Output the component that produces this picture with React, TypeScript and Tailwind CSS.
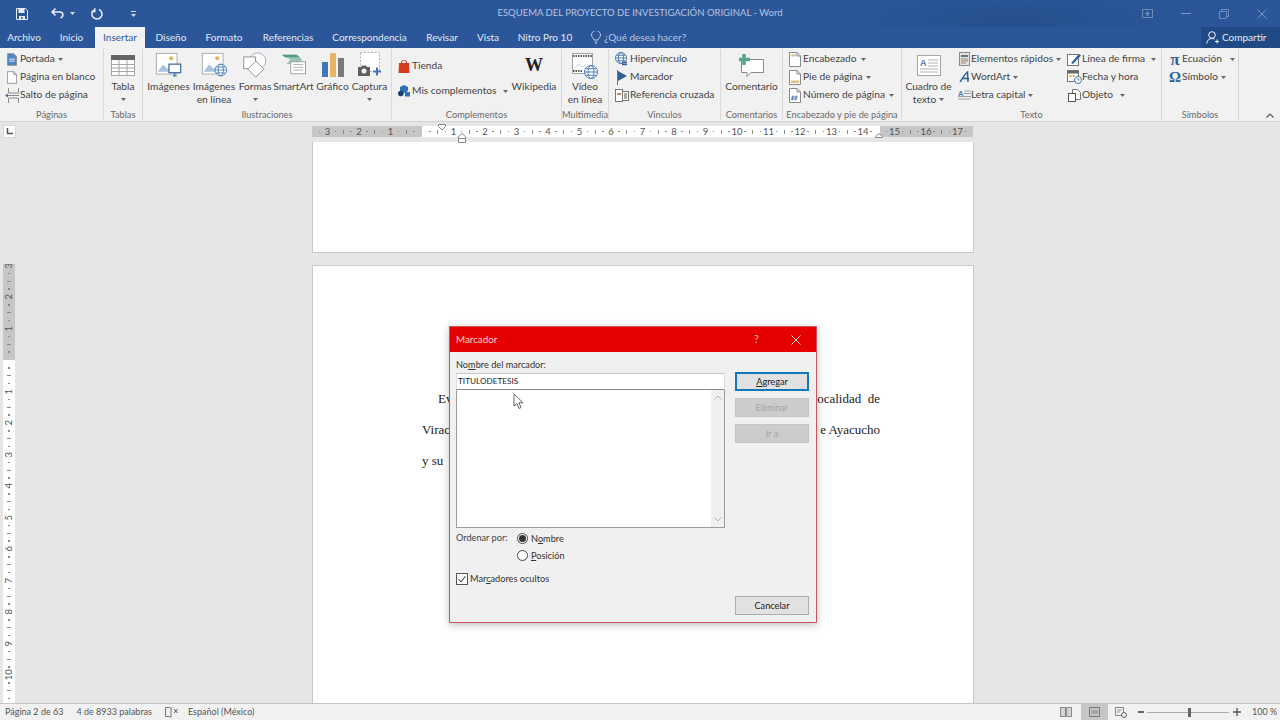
import type { ReactNode } from 'react';

const range = (from: number, to: number) => {
  const out: number[] = [];
  for (let i = from; i <= to; i++) out.push(i);
  return out;
};

function Caret({ className = '' }: { className?: string }) {
  return (
    <svg width="5" height="3" viewBox="0 0 5 3" className={`shrink-0 ${className}`}>
      <path d="M0 0h5L2.5 3z" fill="#666" />
    </svg>
  );
}

function RulerMark({ q, vertical }: { q: number; vertical?: boolean }) {
  const size = vertical ? 'h-[7.875px] w-full' : 'w-[7.875px] h-full';
  let mark: ReactNode = <span className="size-[1.5px] bg-[#8a8a8a]" />;
  if (q % 4 === 0) {
    mark = (
      <span className={`text-[9.5px] leading-none text-[#555] ${vertical ? '-rotate-90' : ''}`}>
        {Math.abs(q / 4)}
      </span>
    );
  } else if (Math.abs(q % 4) === 2) {
    mark = <span className={vertical ? 'h-[1px] w-[4px] bg-[#8a8a8a]' : 'h-[4px] w-[1px] bg-[#8a8a8a]'} />;
  }
  return <div className={`flex shrink-0 items-center justify-center ${size}`}>{mark}</div>;
}

function RibbonGroup({ className, label, children }: { className: string; label: string; children: ReactNode }) {
  return (
    <div className={`my-[1px] flex shrink-0 flex-col border-r border-[#d8d8d8] ${className}`}>
      <div className="flex h-[59px] min-h-0 pt-[1px]">{children}</div>
      <div className="flex h-[12px] items-center justify-center whitespace-nowrap pt-[2px] text-[9.25px] text-[#6a6a6a]">{label}</div>
    </div>
  );
}

function BigButton({ className, icon, lines, caret }: { className: string; icon: ReactNode; lines: string[]; caret?: 'inline' | 'below' }) {
  return (
    <div className={`flex shrink-0 flex-col items-center ${className}`}>
      <div className="flex h-[30px] items-center justify-center">{icon}</div>
      {lines.map((line, i) => (
        <div key={line} className="flex h-[13px] items-center gap-[3px] whitespace-nowrap leading-[13px]">
          {line}
          {caret === 'inline' && i === lines.length - 1 && <Caret />}
        </div>
      ))}
      {caret === 'below' && (
        <div className="flex h-[13px] items-center">
          <Caret />
        </div>
      )}
    </div>
  );
}

function SmallRow({ icon, label, caret, gap = 'gap-[2px]', iconBox = 'w-[14px]' }: { icon: ReactNode; label: string; caret?: ReactNode; gap?: string; iconBox?: string }) {
  return (
    <div className={`flex h-[18px] items-center whitespace-nowrap ${gap}`}>
      <span className={`flex shrink-0 justify-center ${iconBox}`}>{icon}</span>
      <span>{label}</span>
      {caret}
    </div>
  );
}

/* ---- ribbon drawings ---- */

const PageIcon = ({ fill = '#fff', children }: { fill?: string; children?: ReactNode }) => (
  <svg width="12" height="15" viewBox="0 0 12 15">
    <path d="M.5.5h7.5l3.5 3.500v10.500h-11z" fill={fill} stroke="#8a8a8a" />
    <path d="M8 .5v3.500h3.500" fill="none" stroke="#8a8a8a" />
    {children}
  </svg>
);

const PictureBase = ({ children }: { children?: ReactNode }) => (
  <svg width="27" height="27" viewBox="0 0 30 30">
    <rect x="1.500" y="1.500" width="23" height="23" fill="#fff" stroke="#a5a5a5" />
    <circle cx="18" cy="7" r="2.300" fill="#e9b25a" />
    <path d="M3 22l6-8 5 5 3-2 5 5z" fill="#a9c3dd" />
    {children}
  </svg>
);

const Globe = ({ x, y, r = 6 }: { x: number; y: number; r?: number }) => (
  <g fill="#fff" stroke="#3d73ad" strokeWidth="0.900">
    <circle cx={x} cy={y} r={r} />
    <ellipse cx={x} cy={y} rx={r / 2.200} ry={r} fill="none" />
    <path d={`M${x - r} ${y}h${r * 2}M${x - r + 1} ${y - r / 2}h${r * 2 - 2}M${x - r + 1} ${y + r / 2}h${r * 2 - 2}`} fill="none" />
  </g>
);

function Mnemonic({ before, letter, after }: { before?: string; letter: string; after?: string }) {
  return (
    <span>
      {before}
      <span className="underline">{letter}</span>
      {after}
    </span>
  );
}

function DialogButton({ children, tone = 'normal', className = '' }: { children: ReactNode; tone?: 'normal' | 'primary' | 'disabled'; className?: string }) {
  const tones = {
    normal: 'border-[#adadad] bg-[#e1e1e1] text-[#222]',
    primary: 'border-2 border-[#0f78b8] bg-[#e1e1e1] text-[#222]',
    disabled: 'border-[#c4c4c4] bg-[#cccccc] text-[#a2a2a2]',
  };
  return (
    <div className={`flex h-[19px] w-[74px] items-center justify-center border text-[9.2px] ${tones[tone]} ${className}`}>
      {children}
    </div>
  );
}

function BookmarkDialog() {
  return (
    <div className="absolute left-[449px] top-[326px] flex h-[297px] w-[368px] flex-col border border-[#c9545b] bg-[#f0f0f0] text-[9.2px] text-[#333] shadow-[0_2px_8px_rgba(0,0,0,0.25)]">
      <div className="flex h-[25px] shrink-0 items-center bg-[#e60000] pl-[6px] text-[9.8px] text-[#f6d7d7]">
        <span className="flex-1">Marcador</span>
        <span className="mr-[32px] text-[11px] text-[#f3bcbc]">?</span>
        <svg width="10" height="10" viewBox="0 0 10 10" className="mr-[15px]">
          <path d="M.5.5l9 9M9.500.5l-9 9" stroke="#fbe3e3" strokeWidth="1" />
        </svg>
      </div>
      <div className="flex flex-1 flex-col pl-[6px] pr-[7px]">
        <div className="flex h-[21px] shrink-0 items-end pb-[1px]">
          <Mnemonic before="No" letter="m" after="bre del marcador:" />
        </div>
        <div className="flex shrink-0 gap-[10px]">
          <div className="w-[269px] shrink-0">
            <div className="flex h-[17px] items-center border border-b-[#8a8a8a] border-l-[#dcdcdc] border-r-[#dcdcdc] border-t-[#c8c8c8] bg-white pb-[1px] pl-[1px] text-[8.2px] text-[#222]">
              TITULODETESIS
            </div>
            <div className="flex h-[138px] border border-t-0 border-[#9b9b9b] bg-white">
              <div className="flex-1" />
              <div className="flex w-[13px] flex-col items-center justify-between bg-[#f0f0f0] py-[5px]">
                <svg width="8" height="5" viewBox="0 0 8 5"><path d="M.5 4.500L4 1l3.500 3.500" fill="none" stroke="#b5b5b5" /></svg>
                <svg width="8" height="5" viewBox="0 0 8 5"><path d="M.5.5L4 4 7.500.5" fill="none" stroke="#b5b5b5" /></svg>
              </div>
            </div>
            <div className="mt-[2px] flex h-[17px] items-center">
              <span className="w-[61px] pb-[2px] text-[#444]">Ordenar por:</span>
              <span className="flex size-[11px] items-center justify-center rounded-full border border-[#444] bg-white">
                <span className="size-[7px] rounded-full bg-[#333]" />
              </span>
              <span className="ml-[3px]"><Mnemonic before="N" letter="o" after="mbre" /></span>
            </div>
            <div className="flex h-[17px] items-center pl-[61px]">
              <span className="size-[11px] rounded-full border border-[#444] bg-white" />
              <span className="ml-[3px]"><Mnemonic letter="P" after="osición" /></span>
            </div>
            <div className="mt-[8px] flex h-[14px] items-center">
              <svg width="12" height="12" viewBox="0 0 12 12" className="shrink-0">
                <rect x=".5" y=".5" width="11" height="11" fill="#fff" stroke="#555" />
                <path d="M2.500 6l2.500 3 4.500-6" fill="none" stroke="#333" />
              </svg>
              <span className="ml-[2px]"><Mnemonic before="Mar" letter="c" after="adores ocultos" /></span>
            </div>
          </div>
          <div className="-mt-[1px] flex flex-col gap-[7px]">
            <DialogButton tone="primary"><Mnemonic letter="A" after="gregar" /></DialogButton>
            <DialogButton tone="disabled">Eliminar</DialogButton>
            <DialogButton tone="disabled">Ir a</DialogButton>
          </div>
        </div>
        <div className="flex justify-end pt-[10px]">
          <DialogButton>Cancelar</DialogButton>
        </div>
      </div>
      <svg width="11" height="17" viewBox="0 0 11 17" className="absolute left-[63px] top-[66px]">
        <path d="M1 1v12l3-2.500 2 5 2-1-2-4.800h4z" fill="#fff" stroke="#555" strokeWidth="0.900" />
      </svg>
    </div>
  );
}

export default function App() {
  const font = "font-['Lato','Liberation_Sans',sans-serif]";
  return (
    <div className={`relative flex h-[720px] w-[1280px] flex-col overflow-hidden bg-[#e6e6e6] text-[10.2px] text-[#444] ${font}`}>
      {/* title bar */}
      <div className="grid h-[27px] shrink-0 grid-cols-[1fr_auto_1fr] items-center bg-[#2b579a] bg-[radial-gradient(ellipse_190px_36px_at_1010px_20px,#254f8e,transparent)]">
        <div className="flex items-center">
          <svg width="12" height="12" viewBox="0 0 12 12" className="ml-[16px]">
            <path d="M.5.5h9l2 2v9h-11z" fill="none" stroke="#e8eef7" />
            <path d="M2.500 1h6v4h-6zM3 8h6v3.500H3z" fill="#e8eef7" />
            <path d="M5 9h1.500v2H5z" fill="#2b579a" />
          </svg>
          <svg width="13" height="11" viewBox="0 0 13 11" className="ml-[23px]">
            <path d="M4.500.5L1 4l3.500 3.500M1.500 4H9c4 .3 3.500 5 .5 6" fill="none" stroke="#e8eef7" strokeWidth="1.500" />
          </svg>
          <svg width="5" height="3" viewBox="0 0 5 3" className="ml-[6px]"><path d="M0 0h5L2.500 3z" fill="#d5deec" /></svg>
          <svg width="12" height="12" viewBox="0 0 12 12" className="ml-[16px]">
            <path d="M3.500 1.700A5 5 0 1 0 8 1.500M3.800.2v3.300H.5" fill="none" stroke="#e8eef7" strokeWidth="1.500" />
          </svg>
          <svg width="5" height="6" viewBox="0 0 5 6" className="ml-[28px]"><path d="M0 0h5v1H0zM0 3h5L2.500 6z" fill="#d5deec" /></svg>
        </div>
        <div className="text-[9.5px] text-[#b4c4dc]">ESQUEMA DEL PROYECTO DE INVESTIGACIÓN ORIGINAL - Word</div>
        <div className="flex items-center justify-end">
          <svg width="11" height="9" viewBox="0 0 11 9" className="mr-[28px]">
            <path d="M.5.5h10v8H.5z" fill="none" stroke="#6f8db9" />
            <path d="M5.500 2l2.500 3H6.500v2h-2V5H3z" fill="#6f8db9" />
          </svg>
          <span className="mr-[28px] h-[1.500px] w-[10px] bg-[#7f9ac1]" />
          <svg width="10" height="10" viewBox="0 0 10 10" className="mr-[28px]">
            <path d="M.5 2.500h7v7h-7zM2.500 2.500v-2h7v7h-2" fill="none" stroke="#6f8db9" />
          </svg>
          <svg width="10" height="10" viewBox="0 0 10 10" className="mr-[13px]">
            <path d="M.5.5l9 9M9.500.5l-9 9" stroke="#7f9ac1" />
          </svg>
        </div>
      </div>

      {/* tabs */}
      <div className="flex h-[21px] shrink-0 items-stretch bg-[#2b579a] text-[10px] text-[#e3eaf4]">
        <div className="flex w-[48px] items-center justify-center">Archivo</div>
        <div className="flex w-[47px] items-center justify-center">Inicio</div>
        <div className="flex w-[50px] items-center justify-center bg-[#f1f1f1] text-[#2b579a]">Insertar</div>
        <div className="flex w-[52px] items-center justify-center">Diseño</div>
        <div className="flex w-[54px] items-center justify-center">Formato</div>
        <div className="flex w-[74px] items-center justify-center">Referencias</div>
        <div className="flex w-[89px] items-center justify-center">Correspondencia</div>
        <div className="flex w-[56px] items-center justify-center">Revisar</div>
        <div className="flex w-[36px] items-center justify-center">Vista</div>
        <div className="flex w-[78px] items-center justify-center">Nitro Pro 10</div>
        <div className="ml-[7px] flex items-center gap-[3px] text-[#b6c6de]">
          <svg width="10" height="13" viewBox="0 0 10 13">
            <path d="M3 9c0-2-2.500-2.500-2.500-5a4.500 4.500 0 0 1 9 0C9.500 6.500 7 7 7 9zM3.500 11h3M4.300 12.500h1.500" fill="none" stroke="#c9d6e8" strokeWidth="0.900" />
          </svg>
          ¿Qué desea hacer?
        </div>
        <div className="ml-auto flex w-[79px] items-center gap-[3px] bg-[#1f4a85] pl-[5px] text-[#e3eaf4]">
          <svg width="13" height="13" viewBox="0 0 13 13">
            <circle cx="6" cy="4" r="3.300" fill="none" stroke="#f0f4fa" />
            <path d="M.7 12.500c.5-3.500 2.500-5 5.300-5 1 0 1.800.2 2.500.6M9 10.500h4M11 8.500v4" fill="none" stroke="#f0f4fa" />
          </svg>
          Compartir
        </div>
      </div>

      {/* ribbon */}
      <div className="flex h-[74px] shrink-0 border-b border-[#d5d5d5] bg-[#f1f1f1]">
        <RibbonGroup className="w-[104px]" label="Páginas">
          <div className="pl-[7px]">
            <SmallRow
              label="Portada"
              iconBox="w-[10px]"
              gap="gap-[3px]"
              caret={<Caret />}
              icon={<PageIcon fill="#4c86c6"><path d="M2.500 7h7M2.500 9.500h7" stroke="#fff" /></PageIcon>}
            />
            <SmallRow label="Página en blanco" iconBox="w-[10px]" gap="gap-[3px]" icon={<PageIcon />} />
            <SmallRow
              label="Salto de página"
              iconBox="w-[13px]"
              gap="gap-0"
              icon={
                <svg width="15" height="15" viewBox="0 0 15 15" className="-ml-[3px]">
                  <path d="M3.500 0v5h10V0M3.500 15v-5h10v5M3 7.500h11" fill="none" stroke="#8a8a8a" />
                  <path d="M0 7.500l3-2v4z" fill="#3d73ad" />
                </svg>
              }
            />
          </div>
        </RibbonGroup>
        <RibbonGroup className="w-[39px]" label="Tablas">
          <BigButton
            className="w-[38px]"
            caret="below"
            lines={['Tabla']}
            icon={
              <svg width="24" height="21" viewBox="0 0 24 21">
                <rect x=".5" y=".5" width="23" height="20" fill="#fff" stroke="#a5a5a5" />
                <path d="M0 0h24v5H0z" fill="#666" />
                <path d="M0 9.500h24M0 13h24M0 16.500h24M8 5v15M16 5v15" stroke="#a5a5a5" />
              </svg>
            }
          />
        </RibbonGroup>
        <RibbonGroup className="w-[249px]" label="Ilustraciones">
          <BigButton className="ml-[3px] w-[45px]" lines={['Imágenes']} icon={
            <PictureBase>
              <rect x="15.500" y="13.500" width="13" height="9.500" fill="#fff" stroke="#3d6d9e" strokeWidth="1.400" />
              <path d="M20 26.500h4M22 23v3.500" stroke="#3d6d9e" strokeWidth="1.200" />
            </PictureBase>
          } />
          <BigButton className="w-[46px]" lines={['Imágenes', 'en línea']} icon={
            <PictureBase><Globe x={22} y={20} r={6.500} /></PictureBase>
          } />
          <BigButton className="w-[36px]" lines={['Formas']} caret="below" icon={
            <svg width="26" height="27" viewBox="0 0 28 30">
              <circle cx="17" cy="10" r="9" fill="#fff" stroke="#8aa5c3" />
              <rect x="1.500" y="5.500" width="13" height="13" fill="#fff" stroke="#8a8a8a" />
              <path d="M15 10l9 9-9 9-9-9z" fill="#fff" stroke="#8a8a8a" />
            </svg>
          } />
          <BigButton className="w-[41px]" lines={['SmartArt']} icon={
            <svg width="26" height="24" viewBox="0 0 28 26">
              <path d="M1 2h16l6 5-6 5H6l4-5z" fill="#9dc3b5" />
              <path d="M1 2h16l3 2.500H4z" fill="#4e9a83" />
              <rect x="10.500" y="9.500" width="16" height="13" fill="#fff" stroke="#9a9a9a" />
              <path d="M13 12.500h11M13 15.500h11M13 18.500h11" stroke="#b0b0b0" />
            </svg>
          } />
          <BigButton className="w-[37px]" lines={['Gráfico']} icon={
            <svg width="22" height="24" viewBox="0 0 22 24">
              <path d="M0 9h6v15H0z" fill="#3f77b4" />
              <path d="M8 0h6v24H8z" fill="#e6b566" />
              <path d="M16 5h6v19h-6z" fill="#7a7a7a" />
            </svg>
          } />
          <BigButton className="w-[37px]" lines={['Captura']} caret="below" icon={
            <svg width="26" height="26" viewBox="0 0 26 26">
              <rect x="3.500" y=".5" width="19" height="19" fill="#fff" stroke="#b5b5b5" strokeDasharray="2 1.500" />
              <path d="M1 15h3l1-1.500h4l1 1.500h3v9H1z" fill="#5f5f5f" />
              <circle cx="7" cy="19" r="2.500" fill="#f1f1f1" />
              <path d="M16 19.500h8M20 15.500v8" stroke="#3f77b4" strokeWidth="2" />
            </svg>
          } />
        </RibbonGroup>
        <RibbonGroup className="w-[170px]" label="Complementos">
          <div className="w-[118px] pl-[6px] pt-[7px]">
            <SmallRow
              label="Tienda"
              iconBox="w-[12px]"
              icon={
                <svg width="12" height="13" viewBox="0 0 12 13">
                  <path d="M1 3h10l.5 10H.5z" fill="#d83b1c" />
                  <path d="M3.500 4V2a2.500 2 0 0 1 5 0v2" fill="none" stroke="#d83b1c" />
                </svg>
              }
            />
            <div className="mt-[7px]">
              <SmallRow
                label="Mis complementos"
                iconBox="w-[12px]"
                caret={<Caret className="ml-[5px]" />}
                icon={
                  <svg width="12" height="12" viewBox="0 0 12 12">
                    <path d="M6 0l4 2v4L6 8 2 6V2z" fill="#2f6fb5" />
                    <circle cx="2.800" cy="8.500" r="2.800" fill="#173f73" />
                    <path d="M7 7h5v4.500H7z" fill="#2f6fb5" />
                  </svg>
                }
              />
            </div>
          </div>
          <BigButton
            className="w-[48px]"
            lines={['Wikipedia']}
            icon={<span className="font-['Liberation_Serif',serif] text-[18px] font-bold leading-none text-[#222]">W</span>}
          />
        </RibbonGroup>
        <RibbonGroup className="w-[47px]" label="Multimedia">
          <BigButton className="w-[46px]" lines={['Vídeo', 'en línea']} icon={
            <svg width="26" height="27" viewBox="0 0 26 27">
              <rect x=".5" y="1.500" width="20" height="20" fill="#fff" stroke="#a5a5a5" />
              <path d="M1 4h19M1 19h10" stroke="#555" strokeWidth="2" strokeDasharray="1.500 1" />
              <path d="M2 18l4-6 4 3 4-2" fill="none" stroke="#c8d8e8" />
              <Globe x={19} y={20} r={6.500} />
            </svg>
          } />
        </RibbonGroup>
        <RibbonGroup className="w-[112px]" label="Vínculos">
          <div className="pl-[6px]">
            <SmallRow label="Hipervínculo" gap="gap-[1px]" icon={
              <svg width="14" height="14" viewBox="0 0 14 14">
                <Globe x={6} y={6} r={5.500} />
                <path d="M7 10.500h5M7 12.500h5" stroke="#2f5f97" strokeWidth="1.400" />
              </svg>
            } />
            <SmallRow label="Marcador" gap="gap-[1px]" icon={
              <svg width="12" height="15" viewBox="0 0 12 15">
                <path d="M1.500 0v15" stroke="#777" />
                <path d="M2 1l9 5-9 5z" fill="#2f5f97" />
              </svg>
            } />
            <SmallRow label="Referencia cruzada" gap="gap-[1px]" icon={
              <svg width="14" height="13" viewBox="0 0 14 13">
                <rect x=".5" y=".5" width="7" height="12" fill="#fff" stroke="#777" />
                <rect x="7.500" y="2.500" width="6" height="9" fill="#fff" stroke="#777" />
                <path d="M2 5h4" stroke="#c8402c" strokeWidth="1.400" />
                <path d="M9 5h3M9 7h3M9 9h3" stroke="#555" />
              </svg>
            } />
          </div>
        </RibbonGroup>
        <RibbonGroup className="w-[62px]" label="Comentarios">
          <BigButton className="w-[61px]" lines={['Comentario']} icon={
            <svg width="26" height="25" viewBox="0 0 26 25">
              <path d="M2.500 6.500h22v13H12l-4 4v-4H2.500z" fill="#fff" stroke="#8a8a8a" />
              <path d="M5 1v11M0 6.500h11" stroke="#5aa58a" strokeWidth="3.500" />
            </svg>
          } />
        </RibbonGroup>
        <RibbonGroup className="w-[119px]" label="Encabezado y pie de página">
          <div className="pl-[6px]">
            <SmallRow label="Encabezado" iconBox="w-[12px]" gap="gap-[2px]" caret={<Caret className="ml-[2px]" />} icon={
              <PageIcon><path d="M2 2.500h5v2H2z" fill="#e0c080" /></PageIcon>
            } />
            <SmallRow label="Pie de página" iconBox="w-[12px]" gap="gap-[2px]" caret={<Caret className="ml-[2px]" />} icon={
              <PageIcon><path d="M2 10.500h8v2.500H2z" fill="#e0c080" /></PageIcon>
            } />
            <SmallRow label="Número de página" iconBox="w-[12px]" gap="gap-[2px]" caret={<Caret className="ml-[2px]" />} icon={
              <PageIcon><path d="M4 7.500l-1 5M7.500 7.500l-1 5M2.500 9h6M2 11h6" stroke="#2f5f97" strokeWidth="0.800" /></PageIcon>
            } />
          </div>
        </RibbonGroup>
        <RibbonGroup className="w-[260px]" label="Texto">
          <BigButton className="w-[53px]" lines={['Cuadro de', 'texto']} caret="inline" icon={
            <svg width="24" height="21" viewBox="0 0 24 21">
              <rect x=".5" y=".5" width="23" height="20" fill="#fff" stroke="#a5a5a5" />
              <text x="3" y="11" fontSize="9" fontWeight="700" fill="#4a7fb8" fontFamily="Liberation Sans">A</text>
              <path d="M11 5h10M11 8h10M11 11h10M3 14h18M3 17h18" stroke="#b0b0b0" />
            </svg>
          } />
          <div className="ml-[2px] w-[110px]">
            <SmallRow label="Elementos rápidos" gap="gap-0" caret={<Caret className="ml-[3px]" />} icon={
              <svg width="11" height="14" viewBox="0 0 11 14">
                <rect x=".5" y=".5" width="10" height="13" fill="#e9e4d5" stroke="#8a8a8a" />
                <path d="M2 3h7v2H2z" fill="#4f7aa8" />
                <path d="M2 7h7M2 9h7M2 11h5" stroke="#888" />
              </svg>
            } />
            <SmallRow label="WordArt" gap="gap-0" caret={<Caret className="ml-[3px]" />} icon={
              <svg width="11" height="12" viewBox="0 0 11 12">
                <path d="M1 11C3 8 6 3 8.500 1L9 11M3.500 7.500H10" fill="none" stroke="#2f5f97" strokeWidth="1.500" />
              </svg>
            } />
            <SmallRow label="Letra capital" gap="gap-0" caret={<Caret className="ml-[3px]" />} icon={
              <svg width="13" height="12" viewBox="0 0 13 12">
                <text x="0" y="6.500" fontSize="7.500" fill="#4a7fb8" fontWeight="700" fontFamily="Liberation Sans">A</text>
                <path d="M6 2h7M6 4.500h7M0 7.500h13M0 10h13" stroke="#a0a0a0" />
              </svg>
            } />
          </div>
          <div className="w-[90px]">
            <SmallRow label="Línea de firma" gap="gap-0" iconBox="w-[15px]" caret={<Caret className="ml-[6px]" />} icon={
              <svg width="15" height="13" viewBox="0 0 15 13">
                <rect x=".5" y="1.500" width="11" height="11" fill="#fff" stroke="#777" />
                <path d="M4 10l8-9 2 1.500-8 8.500z" fill="#2f5f97" />
              </svg>
            } />
            <SmallRow label="Fecha y hora" gap="gap-0" iconBox="w-[15px]" icon={
              <svg width="15" height="14" viewBox="0 0 15 14">
                <rect x=".5" y=".5" width="11" height="11" fill="#fff" stroke="#777" />
                <path d="M1 1h10v2.500H1z" fill="#666" />
                <path d="M2.500 5h2v2h-2zM5.500 5h2v2h-2z" fill="#d9a852" />
                <circle cx="11" cy="10" r="3.500" fill="#fff" stroke="#3d73ad" />
                <path d="M11 8v2h1.500" fill="none" stroke="#3d73ad" strokeWidth="0.800" />
              </svg>
            } />
            <SmallRow label="Objeto" gap="gap-0" iconBox="w-[15px]" caret={<Caret className="ml-[7px]" />} icon={
              <svg width="13" height="13" viewBox="0 0 13 13">
                <path d="M4.500.5h5l3 3v7h-8z" fill="#fff" stroke="#777" />
                <rect x=".5" y="4.500" width="7" height="8" fill="#fff" stroke="#555" />
              </svg>
            } />
          </div>
        </RibbonGroup>
        <RibbonGroup className="w-[77px]" label="Símbolos">
          <div className="pl-[6px]">
            <SmallRow
              label="Ecuación"
              gap="gap-0"
              caret={<Caret className="ml-[8px]" />}
              icon={<span className="font-['Liberation_Serif',serif] text-[17px] font-bold leading-none text-[#2f5f97]">π</span>}
            />
            <SmallRow
              label="Símbolo"
              gap="gap-0"
              caret={<Caret className="ml-[3px]" />}
              icon={<span className="font-['Liberation_Serif',serif] text-[15px] font-bold leading-none text-[#2f5f97]">Ω</span>}
            />
          </div>
        </RibbonGroup>
        <div className="flex flex-1 items-end justify-end pb-[3px] pr-[6px]">
          <svg width="8" height="5" viewBox="0 0 8 5"><path d="M.5 4.500L4 1l3.500 3.500" fill="none" stroke="#555" strokeWidth="1.200" /></svg>
        </div>
      </div>

      {/* ruler row */}
      <div className="flex h-[20px] shrink-0 items-start">
        <div className="ml-[3px] mt-[3px] flex size-[13px] items-end justify-center border border-[#d8d8d8] bg-white pb-[2px]">
          <svg width="7" height="7" viewBox="0 0 7 7"><path d="M1.500 0v5.500H7" fill="none" stroke="#555" strokeWidth="1.500" /></svg>
        </div>
        <div className="ml-[296px] mt-[4px] flex h-[11px]">
          <div className="flex w-[110px] justify-end bg-[#c6c6c6] pr-[4px]">
            {range(-13, -1).map((q) => <RulerMark key={q} q={q} />)}
          </div>
          <div className="flex w-[458px] bg-white pl-[4px]">
            {range(1, 57).map((q) => <RulerMark key={q} q={q} />)}
          </div>
          <div className="flex w-[93px] bg-[#c6c6c6] pl-[2.700px]">
            {range(59, 69).map((q) => <RulerMark key={q} q={q} />)}
          </div>
        </div>
      </div>

      {/* document */}
      <div className="flex min-h-0 flex-1">
        <div className="ml-[3px] flex w-[12px] shrink-0 flex-col pt-[122px]">
          <div className="flex h-[96px] shrink-0 flex-col justify-end overflow-hidden bg-[#c6c6c6] pb-[4px]">
            {range(-12, -1).map((q) => <RulerMark key={q} q={q} vertical />)}
          </div>
          <div className="flex flex-1 flex-col overflow-hidden bg-white pt-[4px]">
            {range(1, 43).map((q) => <RulerMark key={q} q={q} vertical />)}
          </div>
        </div>
        <div className="ml-[297px] flex w-[662px] shrink-0 flex-col">
          <div className="h-[111px] shrink-0 border-x border-b border-[#c8c8c8] bg-white" />
          <div className="mt-[12px] flex-1 border-x border-t border-[#c8c8c8] bg-white pl-[109px] pr-[93px] pt-[117px] font-['Liberation_Serif',serif] text-[13px] leading-[31px] text-[#222]">
            <div className="flex justify-between pl-[16px]"><span>Ev</span><span>ocalidad&nbsp; de</span></div>
            <div className="flex justify-between"><span>Virac</span><span>e Ayacucho</span></div>
            <div>y su</div>
          </div>
        </div>
      </div>

      {/* status bar */}
      <div className="flex h-[17px] shrink-0 items-center border-t border-[#c6c6c6] bg-[#f1f1f1] text-[9px] text-[#555]">
        <span className="ml-[5px]">Página 2 de 63</span>
        <span className="ml-[13px]">4 de 8933 palabras</span>
        <svg width="13" height="11" viewBox="0 0 13 11" className="ml-[13px]">
          <path d="M.5.5h4l1.500 1v9L4.500 9.500h-4zM6 1.500L7.500.5" fill="none" stroke="#777" />
          <path d="M9 2l3.500 4M12.500 2L9 6" stroke="#555" />
        </svg>
        <span className="ml-[10px]">Español (México)</span>
        <div className="ml-auto flex h-full items-center">
          <svg width="12" height="10" viewBox="0 0 12 10" className="mr-[9px]">
            <path d="M.5.5h5v9h-5zM6.500.5h5v9h-5z" fill="#cfd6dc" stroke="#888" />
          </svg>
          <div className="flex h-full w-[27px] items-center justify-center bg-[#c6c6c6]">
            <svg width="11" height="10" viewBox="0 0 11 10">
              <path d="M.5.5h10v9H.5z" fill="none" stroke="#777" />
              <path d="M2 4h7M2 6h7" stroke="#888" />
            </svg>
          </div>
          <svg width="12" height="11" viewBox="0 0 12 11" className="ml-[7px]">
            <path d="M.5.5h8v8h-8z" fill="none" stroke="#888" />
            <path d="M2 3h5M2 5h3" stroke="#999" />
            <circle cx="9" cy="8" r="2.500" fill="#eee" stroke="#666" />
          </svg>
          <span className="ml-[11px] h-[1.500px] w-[6px] bg-[#666]" />
          <div className="relative ml-[3px] flex h-[9px] w-[82px] items-center">
            <span className="h-[1px] w-full bg-[#aaa]" />
            <span className="absolute left-[41px] h-[9px] w-[3px] bg-[#666]" />
          </div>
          <svg width="8" height="8" viewBox="0 0 8 8" className="ml-[4px]"><path d="M0 4h8M4 0v8" stroke="#555" strokeWidth="1.300" /></svg>
          <span className="ml-[11px] mr-[5px] w-[23px] whitespace-nowrap">100 %</span>
        </div>
      </div>

      {/* ruler indent markers */}
      <svg width="8" height="7" viewBox="0 0 8 7" className="absolute left-[438px] top-[124px]">
        <path d="M.5.5h7v2L4 6 .5 2.500z" fill="#fff" stroke="#888" />
      </svg>
      <svg width="8" height="10" viewBox="0 0 8 10" className="absolute left-[458px] top-[133px]">
        <path d="M.5 3.500L4 .5l3.500 3v6h-7zM.5 5.500h7" fill="#fff" stroke="#888" />
      </svg>
      <svg width="8" height="5" viewBox="0 0 8 5" className="absolute left-[875px] top-[133px]">
        <path d="M.5 3.500L4 .5l3.500 3v1h-7z" fill="#fff" stroke="#888" />
      </svg>

      <BookmarkDialog />
    </div>
  );
}
